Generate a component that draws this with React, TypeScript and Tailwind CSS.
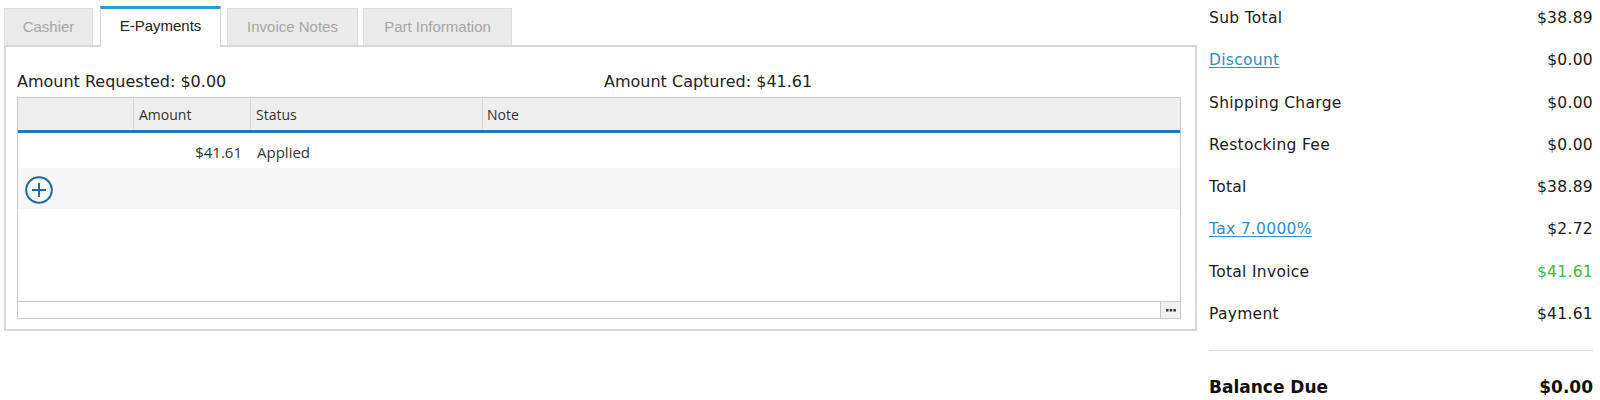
import React from "react";

const tabs = [
  { label: "Cashier", w: "w-[89px]", ml: "ml-0", active: false },
  { label: "E-Payments", w: "w-[121px]", ml: "ml-[7px]", active: true },
  { label: "Invoice Notes", w: "w-[131px]", ml: "ml-[6px]", active: false },
  { label: "Part Information", w: "w-[149px]", ml: "ml-[5px]", active: false },
];

const totals = [
  { label: "Sub Total", value: "$38.89" },
  { label: "Discount", value: "$0.00", link: true },
  { label: "Shipping Charge", value: "$0.00" },
  { label: "Restocking Fee", value: "$0.00" },
  { label: "Total", value: "$38.89" },
  { label: "Tax 7.0000%", value: "$2.72", link: true },
  { label: "Total Invoice", value: "$41.61", green: true },
  { label: "Payment", value: "$41.61" },
];

function PlusIcon() {
  return (
    <svg width="28" height="28" viewBox="0 0 28 28" fill="none">
      <circle cx="14" cy="14" r="12.8" stroke="#1b6b9c" strokeWidth="2" />
      <path d="M7 14h14M14 7v14" stroke="#1b6b9c" strokeWidth="2" />
    </svg>
  );
}

export default function App() {
  return (
    <div className="w-[1600px] h-[400px] bg-white flex overflow-hidden">
      <div className="w-[1193px] ml-[4px] flex flex-col">
        <div className="flex items-end h-[45px] font-['Liberation_Sans',Arial,sans-serif] text-[15px]">
          {tabs.map((t) =>
            t.active ? (
              <div
                key={t.label}
                className={`${t.w} ${t.ml} relative z-10 h-[41px] -mb-[2px] bg-white border-t-[3px] border-t-[#2b9bd3] border-x border-x-[#d4d4d4] flex items-center justify-center pb-[4px] text-[#222]`}
              >
                {t.label}
              </div>
            ) : (
              <div
                key={t.label}
                className={`${t.w} ${t.ml} h-[37px] bg-[#ebebeb] border border-[#dedede] border-b-0 flex items-center justify-center text-[#a5a5a5]`}
              >
                {t.label}
              </div>
            )
          )}
        </div>

        <div className="h-[286px] border-2 border-[#d8d8d8] pl-[11px] pr-[14px] pt-[25px]">
          <div className="flex h-5 leading-5 text-[16px] text-[#222] font-['DejaVu_Sans',Verdana,sans-serif]">
            <span className="w-[587px]">Amount Requested: $0.00</span>
            <span>Amount Captured: $41.61</span>
          </div>

          <div className="mt-[5px] w-[1164px] h-[222px] border border-[#c9c9c9] flex flex-col font-['Open_Sans',sans-serif] text-[#333]">
            <div className="h-[35px] bg-[#efefef] border-b-[3px] border-b-[#1c78b8] flex text-[14px]">
              <div className="w-[115px]" />
              <div className="w-[117px] border-l border-[#dadada] pl-[5px] flex items-center">Amount</div>
              <div className="w-[232px] border-l border-[#dadada] pl-[5px] flex items-center">Status</div>
              <div className="flex-1 border-l border-[#dadada] pl-[4px] flex items-center">Note</div>
            </div>
            <div className="h-[35px] flex items-center text-[15px] pt-[3px]">
              <div className="w-[115px]" />
              <div className="w-[117px] text-right pr-[8px]">$41.61</div>
              <div className="w-[232px] pl-[7px]">Applied</div>
            </div>
            <div className="h-[41px] bg-[#f6f6f6] flex items-center pl-[7px] pt-[2px]">
              <PlusIcon />
            </div>
            <div className="flex-1" />
            <div className="h-[17px] border-t border-[#c9c9c9] flex justify-end">
              <div className="w-[20px] border-l border-[#c9c9c9] bg-[#f1f1f1] flex items-center justify-center">
                <svg width="10" height="3" viewBox="0 0 10 3">
                  <rect x="0" y="0" width="2.5" height="2.5" fill="#333" />
                  <rect x="3.7" y="0" width="2.5" height="2.5" fill="#333" />
                  <rect x="7.4" y="0" width="2.5" height="2.5" fill="#333" />
                </svg>
              </div>
            </div>
          </div>
        </div>
      </div>

      <div className="ml-[12px] w-[384px] font-['DejaVu_Sans',Verdana,sans-serif] text-[15.5px] tracking-[0.3px] text-[#1a1a1a]">
        {totals.map((r) => (
          <div key={r.label} className="h-[42.3px] pt-[8px] leading-5 flex justify-between">
            <span className={r.link ? "text-[#2e8fc6] underline underline-offset-2" : ""}>{r.label}</span>
            <span className={r.green ? "text-[#3db83d]" : ""}>{r.value}</span>
          </div>
        ))}
        <div className="mt-[12px] border-t border-[#dcdcdc]" />
        <div className="mt-[24px] flex justify-between font-bold text-[17px] tracking-normal leading-6 text-[#111]">
          <span>Balance Due</span>
          <span>$0.00</span>
        </div>
      </div>
    </div>
  );
}
